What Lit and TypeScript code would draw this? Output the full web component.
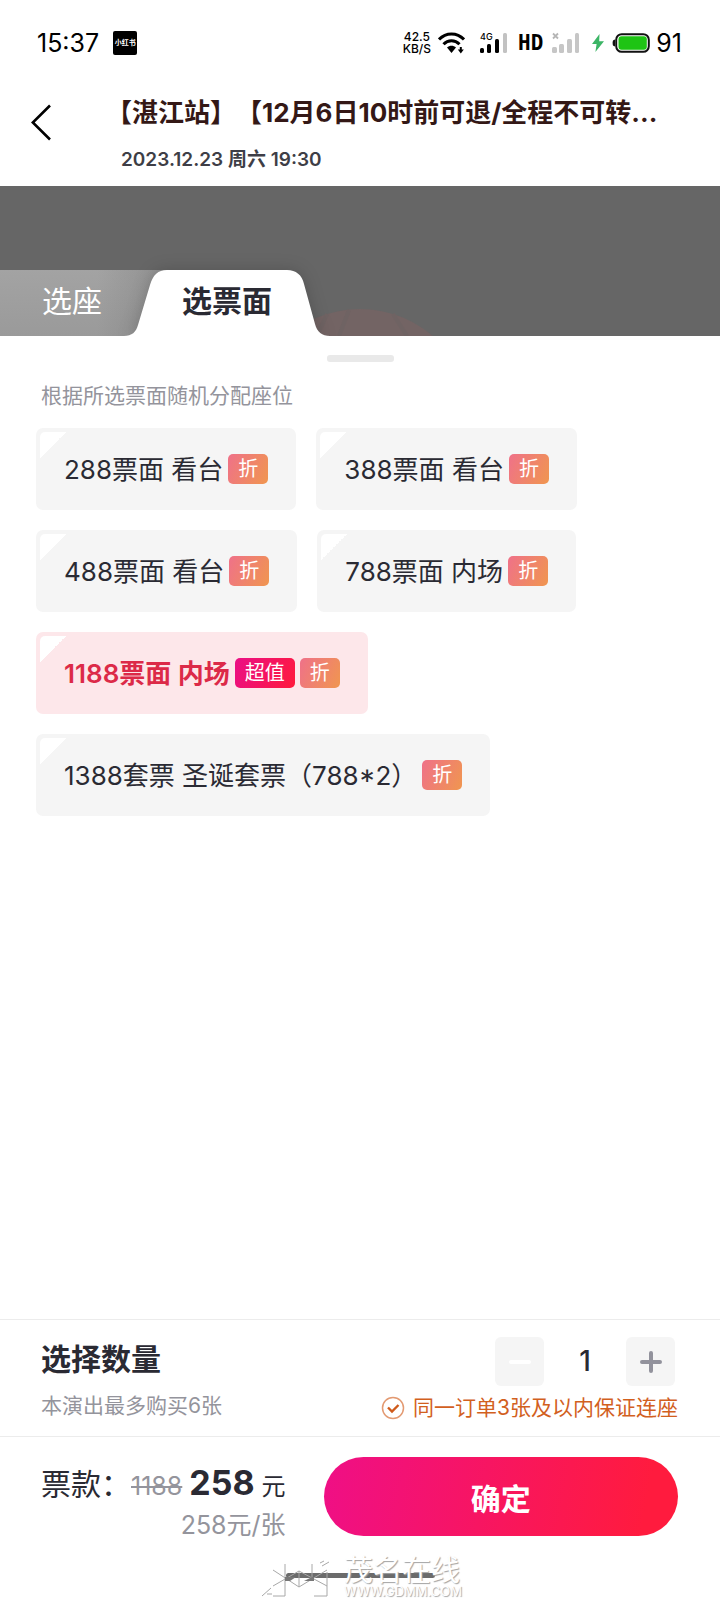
import { LitElement, html, css } from "lit";
import { customElement, state } from "lit/decorators.js";
import { classMap } from "lit/directives/class-map.js";

interface Ticket {
  id: string;
  label: string;
  superValue?: boolean;
}

const TICKETS: Ticket[] = [
  { id: "288", label: "288票面 看台" },
  { id: "388", label: "388票面 看台" },
  { id: "488", label: "488票面 看台" },
  { id: "788", label: "788票面 内场" },
  { id: "1188", label: "1188票面 内场", superValue: true },
  { id: "1388", label: "1388套票 圣诞套票（788*2）" },
];

@customElement("status-bar")
class StatusBar extends LitElement {
  static styles = css`
    :host {
      display: flex;
      align-items: center;
      height: 84px;
      padding: 1px 38px 0 37px;
      box-sizing: border-box;
      color: #000;
      font-size: 25px;
      line-height: 30px;
    }
    .app {
      margin-left: 14px;
      width: 24px;
      height: 24px;
      border-radius: 2px;
      background: #000;
      color: #fff;
      font-size: 7px;
      font-weight: 700;
      line-height: 24px;
      text-align: center;
    }
    .right {
      display: flex;
      align-items: center;
      margin-left: auto;
    }
    .speed {
      font-size: 12px;
      line-height: 12px;
      font-weight: 500;
      text-align: center;
      margin-right: 7px;
    }
    .wifi { margin-right: 15px; }
    .signal { margin-right: 10px; overflow: visible; }
    .hd {
      font-family: "DejaVu Sans Mono", monospace;
      font-size: 21px;
      font-weight: 700;
      margin-right: 9px;
    }
    .nosignal { margin-right: 12px; }
    .bolt { margin-right: 8px; }
    .battery { margin-right: 6px; }
    svg { display: block; }
  `;

  render() {
    return html`
      <span>15:37</span>
      <span class="app">小红书</span>
      <div class="right">
        <div class="speed"><div>42.5</div><div>KB/S</div></div>
        <svg class="wifi" width="27" height="22" viewBox="0 0 27 22" fill="none" stroke="#000" stroke-width="3">
          <path d="M1 7.5C8 0 19 0 26 7.5" />
          <path d="M5.5 12.3C10 7.4 17 7.4 21.5 12.3" />
          <path d="M9 15.5c2.6-2.3 6.4-2.3 9 0L13.5 21Z" fill="#000" stroke="none" />
          <path d="M22.8 15v3" stroke-width="2" />
          <path d="M19.8 17.4h6L22.8 21.4Z" fill="#000" stroke="none" />
        </svg>
        <svg class="signal" width="28" height="22" viewBox="0 0 28 22">
          <rect x="0" y="16" width="4" height="5" rx="1.5" />
          <rect x="7" y="12" width="4" height="9" rx="1.5" />
          <rect x="15" y="7" width="4" height="14" rx="1.5" />
          <rect x="23" y="1" width="4" height="20" rx="1.5" fill="#c2c2c2" />
          <text x="0" y="8" font-size="9" font-weight="500">4G</text>
        </svg>
        <span class="hd">HD</span>
        <svg class="nosignal" width="28" height="22" viewBox="0 0 28 22" fill="#c6c6c6">
          <rect x="0" y="15" width="5" height="6" rx="1.5" />
          <rect x="7" y="12" width="5" height="9" rx="1.5" />
          <rect x="15" y="7" width="5" height="14" rx="1.5" />
          <rect x="23" y="1" width="4" height="20" rx="1.5" />
          <path d="M1 1.5l5 5M6 1.5l-5 5" stroke="#b5b5b5" stroke-width="1.8" />
        </svg>
        <svg class="bolt" width="12" height="20" viewBox="0 0 12 20">
          <path d="M7.500 1L0 11h4.600L3.400 19 12 8.200H7.200Z" fill="#3cb566" />
        </svg>
        <svg class="battery" width="38" height="20" viewBox="0 0 38 20">
          <path d="M3 6.500C1 6.800.6 8 .6 10s.4 3.200 2.400 3.500Z" fill="#111" />
          <rect x="4.200" y="1.200" width="32.600" height="17.600" rx="5.500" fill="#fff" stroke="#111" stroke-width="2" />
          <rect x="6.500" y="3.300" width="28.300" height="13.400" rx="3" fill="#1ec414" />
        </svg>
        <span>91</span>
      </div>
    `;
  }
}

@customElement("ticket-option")
class TicketOption extends LitElement {
  static properties = {
    ticket: { attribute: false },
    selected: { type: Boolean },
  };
  declare ticket: Ticket;
  declare selected: boolean;

  static styles = css`
    :host { display: block; }
    .card {
      position: relative;
      display: flex;
      align-items: center;
      gap: 5px;
      height: 82px;
      padding: 0 28px;
      border-radius: 7px;
      background: #f5f5f5;
      color: #2a2a33;
      font-size: 26px;
      line-height: 38px;
      white-space: nowrap;
      cursor: pointer;
    }
    .card.on {
      background: #fde7ea;
      color: #dc2a48;
      font-weight: 600;
    }
    .name { padding-top: 2px; }
    .corner {
      position: absolute;
      left: 4px;
      top: 4px;
      width: 26px;
      height: 26px;
      border-radius: 5px 0 0 0;
      background: linear-gradient(135deg, #fff 50%, transparent 50%);
    }
    .radio {
      position: absolute;
      inset: 0;
      margin: 0;
      opacity: 0;
      cursor: pointer;
    }
    .badge {
      padding: 0 10px;
      border-radius: 5px;
      background: linear-gradient(115deg, #ef7189, #f0964f);
      color: #fff;
      font-size: 20px;
      line-height: 30px;
      font-weight: 400;
    }
    .badge.super { background: linear-gradient(115deg, #ea0f86, #ff1a3c); }
  `;

  render() {
    const t = this.ticket;
    return html`
      <label class=${classMap({ card: true, on: this.selected })}>
        <input class="radio" type="radio" name="ticket" .checked=${this.selected} />
        <span class="corner"></span>
        <span class="name">${t.label}</span>
        ${t.superValue ? html`<span class="badge super">超值</span>` : null}
        <span class="badge">折</span>
      </label>
    `;
  }
}

@customElement("app-root")
class AppRoot extends LitElement {
  @state() private picked = "1188";
  @state() private count = 1;

  static styles = css`
    :host {
      display: flex;
      flex-direction: column;
      min-height: 100vh;
      background: #fff;
      color: #2a2a33;
      font-family: Inter, "Noto Sans CJK SC", sans-serif;
      text-spacing-trim: space-all;
    }
    button {
      border: 0;
      padding: 0;
      margin: 0;
      background: none;
      color: inherit;
      font: inherit;
      cursor: pointer;
    }
    svg { display: block; }
    .head {
      display: flex;
      align-items: flex-start;
      height: 102px;
      padding: 0 32px 0 31px;
    }
    .back {
      width: 75px;
      padding-top: 20px;
      flex: none;
    }
    .title {
      margin: 0;
      padding-top: 10px;
      font-size: 26px;
      line-height: 38px;
      font-weight: 700;
      color: #341816;
      white-space: nowrap;
    }
    .date {
      margin: 14px 0 0 15px;
      font-size: 19px;
      line-height: 28px;
      font-weight: 600;
      color: #3e3e46;
    }
    .band {
      position: relative;
      display: flex;
      align-items: flex-end;
      height: 150px;
      background: #666;
      overflow: hidden;
    }
    .seatmap {
      position: absolute;
      left: 303px;
      bottom: 0;
    }
    .tab {
      box-sizing: border-box;
      height: 66px;
      width: 176px;
      padding: 0 32px 4px 0;
      background: linear-gradient(90deg, transparent 55%, rgba(80, 80, 80, 0.25)), linear-gradient(#a3a3a3, #9a9a9a);
      color: #fff;
      font-size: 30px;
      line-height: 62px;
    }
    .tab.active {
      position: relative;
      display: grid;
      width: 206px;
      padding: 0;
      margin-left: -52px;
      background: none;
      color: #2a2a33;
      font-weight: 700;
    }
    .tab.active > * { grid-area: 1 / 1; }
    .shape {
      overflow: visible;
      filter: drop-shadow(0 0 8px rgba(0, 0, 0, 0.18));
    }
    .label { z-index: 1; }
    .sheet {
      flex: 1;
      padding: 19px 36px 40px;
    }
    .handle {
      width: 67px;
      height: 7px;
      margin: 0 auto;
      border-radius: 3px;
      background: #e9e9e9;
    }
    .hint {
      margin: 18px 0 16px 5px;
      font-size: 21px;
      line-height: 32px;
      color: #94949c;
    }
    .tickets {
      display: flex;
      flex-wrap: wrap;
      gap: 20px;
    }
    .qty {
      display: grid;
      grid-template-columns: 1fr auto;
      align-content: start;
      height: 117px;
      padding: 17px 42px 0 41px;
      box-sizing: border-box;
      border-top: 1px solid #ececec;
    }
    .heading {
      margin: 0;
      font-size: 30px;
      line-height: 44px;
      font-weight: 700;
    }
    .stepper {
      display: flex;
      align-items: center;
      justify-self: end;
      margin-right: 3px;
      height: 49px;
    }
    .step {
      display: grid;
      place-items: center;
      width: 49px;
      height: 49px;
      border-radius: 6px;
      background: #f5f5f5;
    }
    .count {
      width: 82px;
      text-align: center;
      font-size: 28px;
      line-height: 49px;
      font-weight: 500;
    }
    .note {
      margin: 4px 0 0;
      font-size: 21px;
      line-height: 32px;
      color: #94949c;
    }
    .promise {
      display: flex;
      align-items: center;
      gap: 8px;
      margin: 6px 0 0;
      font-size: 21px;
      line-height: 32px;
      color: #d2601e;
    }
    .pay {
      display: flex;
      align-items: flex-start;
      gap: 38px;
      height: 136px;
      padding: 20px 42px 0 41px;
      box-sizing: border-box;
      border-top: 1px solid #ececec;
    }
    .cost { padding-top: 2px; }
    .sum {
      display: flex;
      align-items: baseline;
      height: 48px;
      white-space: nowrap;
    }
    .sumlabel { font-size: 30px; line-height: 50px; }
    .old {
      font-size: 25px;
      color: #94949c;
      margin-right: 7px;
    }
    .now {
      font-size: 34px;
      font-weight: 700;
      margin-right: 7px;
    }
    .unit { font-size: 24px; }
    .each {
      font-size: 25px;
      line-height: 36px;
      color: #94949c;
      text-align: right;
    }
    .confirm {
      flex: 1;
      box-sizing: border-box;
      height: 79px;
      padding-top: 5px;
      border-radius: 40px;
      background: linear-gradient(100deg, #ef0f86, #ff1b3e 90%);
      color: #fff;
      font-size: 30px;
      line-height: 44px;
      font-weight: 700;
    }
    .foot {
      position: relative;
      height: 28px;
      padding-top: 1px;
      box-sizing: border-box;
    }
    .home {
      width: 149px;
      height: 5px;
      margin: 0 auto;
      border-radius: 3px;
      background: #6b6b6b;
    }
    .mark {
      position: absolute;
      left: 50%;
      bottom: 2px;
      display: flex;
      align-items: flex-end;
      gap: 14px;
      margin-left: -98px;
      color: #fff;
      text-shadow: 1px 1px 1px #a4a4a4;
      white-space: nowrap;
    }
    .site {
      font-size: 29px;
      line-height: 28px;
      font-weight: 400;
    }
    .url {
      font-size: 13px;
      line-height: 13px;
    }
  `;

  private step(delta: number) {
    this.count = Math.min(6, Math.max(1, this.count + delta));
  }

  render() {
    return html`
      <status-bar></status-bar>
      <header class="head">
        <button class="back" aria-label="返回">
          <svg width="20" height="37" viewBox="0 0 20 37" fill="none" stroke="#000" stroke-width="2.600">
            <path d="M19 1.500L1.800 18.500 19 35.500" />
          </svg>
        </button>
        <div>
          <h1 class="title">【湛江站】【12月6日10时前可退/全程不可转...</h1>
          <p class="date">2023.12.23 周六 19:30</p>
        </div>
      </header>

      <nav class="band">
        <svg class="seatmap" width="140" height="30" viewBox="0 0 140 30">
          <circle cx="57" cy="115" r="112" fill="#736464" />
          <path d="M24 8L14 30M46 4L36 30M90 8L104 30" stroke="#6f6363" stroke-width="4" />
        </svg>
        <button class="tab">选座</button>
        <button class="tab active">
          <svg class="shape" width="206" height="66" viewBox="0 0 206 66">
            <path d="M0 66C8 66 12 62 14 55L26 15C29 5 34 0 43 0H163C172 0 178 5 180 14L191 54C193 62 198 66 206 66Z" fill="#fff" />
          </svg>
          <span class="label">选票面</span>
        </button>
      </nav>

      <main class="sheet">
        <div class="handle"></div>
        <p class="hint">根据所选票面随机分配座位</p>
        <div class="tickets">
          ${TICKETS.map(
            (t) => html`<ticket-option
              .ticket=${t}
              .selected=${t.id === this.picked}
              @click=${() => (this.picked = t.id)}
            ></ticket-option>`
          )}
        </div>
      </main>

      <section class="qty">
        <h2 class="heading">选择数量</h2>
        <div class="stepper">
          <button class="step" aria-label="减少" @click=${() => this.step(-1)}>
            <svg width="24" height="24" viewBox="0 0 24 24" stroke="#fff" stroke-width="4" stroke-linecap="round">
              <path d="M3 12H21" />
            </svg>
          </button>
          <output class="count">${this.count}</output>
          <button class="step" aria-label="增加" @click=${() => this.step(1)}>
            <svg width="24" height="24" viewBox="0 0 24 24" stroke="#92929c" stroke-width="4" stroke-linecap="round">
              <path d="M3 12H21M12 3V21" />
            </svg>
          </button>
        </div>
        <p class="note">本演出最多购买6张</p>
        <p class="promise">
          <svg width="24" height="24" viewBox="0 0 24 24" fill="none">
            <circle cx="12" cy="12" r="10.500" stroke="#e39a72" stroke-width="1.500" />
            <path d="M7 11.500L11 15.500 17.500 9" stroke="#cf5a1a" stroke-width="2.400" />
          </svg>
          <span>同一订单3张及以内保证连座</span>
        </p>
      </section>

      <section class="pay">
        <div class="cost">
          <div class="sum">
            <span class="sumlabel">票款：</span>
            <s class="old">1188</s>
            <span class="now">258</span>
            <span class="unit">元</span>
          </div>
          <div class="each">258元/张</div>
        </div>
        <button class="confirm">确定</button>
      </section>

      <footer class="foot">
        <div class="home"></div>
        <div class="mark">
          <svg width="68" height="38" viewBox="0 0 68 38" fill="none" stroke="#a8a8a8">
            <path d="M23 4V36H11M50 4V18M65 12V36H52M37 11V27M11 10L37 27 65 10M11 26L37 11 65 26" />
            <path d="M0 36L9 28M5 34H10M60 6L67 2M58 3L62 1" />
            <path d="M23 17H34L28 21H23ZM42 21L50 17H52V21Z" fill="#777" stroke="none" />
          </svg>
          <div>
            <div class="site">茂名在线</div>
            <div class="url">WWW.GDMM.COM</div>
          </div>
        </div>
      </footer>
    `;
  }
}
